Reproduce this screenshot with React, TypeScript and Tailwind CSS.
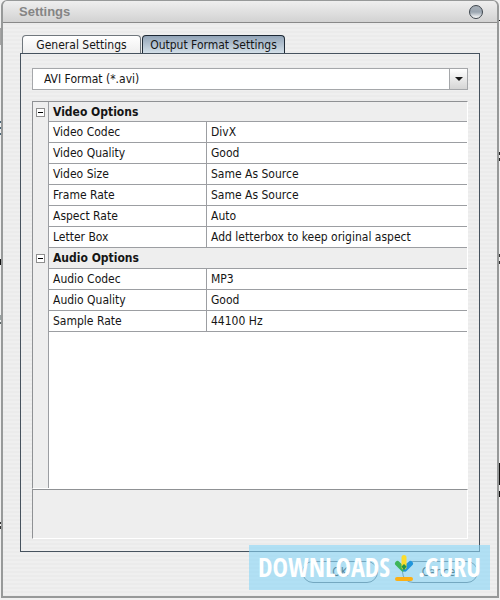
import React from "react";

const video = [
  ["Video Codec", "DivX"],
  ["Video Quality", "Good"],
  ["Video Size", "Same As Source"],
  ["Frame Rate", "Same As Source"],
  ["Aspect Rate", "Auto"],
  ["Letter Box", "Add letterbox to keep original aspect"],
];

const audio = [
  ["Audio Codec", "MP3"],
  ["Audio Quality", "Good"],
  ["Sample Rate", "44100 Hz"],
];

function Group({ title, rows, first }: { title: string; rows: string[][]; first?: boolean }) {
  return (
    <tbody>
      <tr className={first ? "h-5" : "h-[21px]"}>
        <td className="border-r border-[#9c9ea2]">
          <button
            aria-label={"Collapse " + title}
            className="mx-auto flex size-[9px] items-center justify-center border border-[#8f8f8f] bg-white"
          >
            <span className="h-px w-[5px] bg-black" />
          </button>
        </td>
        <th colSpan={2} className="border-b border-[#9c9ea2] px-1 text-left font-bold">
          {title}
        </th>
      </tr>
      {rows.map(([name, value]) => (
        <tr key={name} className="h-[21px]">
          <td className="border-r border-[#9c9ea2]" />
          <th className="border-r border-b border-[#9c9ea2] bg-white px-1 text-left font-normal">{name}</th>
          <td className="border-b border-[#9c9ea2] bg-white px-1">{value}</td>
        </tr>
      ))}
    </tbody>
  );
}

function Logo() {
  return (
    <svg viewBox="0 0 20 28" className="mx-1 h-7 w-5" aria-hidden="true">
      <g strokeLinecap="round" strokeWidth="5" fill="none">
        <path d="M3.5 9.5L9 15" stroke="#3fb559" />
        <path d="M16.500 9.500L11 15" stroke="#2196dc" />
        <path d="M10 3.500V13" stroke="#fbdc2c" />
        <path d="M7.500 12.500L10 10L12.500 12.500L10 16.500Z" fill="#239447" stroke="none" />
        <path d="M3 25H17" stroke="#fbb016" strokeWidth="4" />
      </g>
    </svg>
  );
}

// Strips of the window behind the dialog: space above, height, colour.
type Mark = [number, number, string];
const leftMarks: Mark[] = [
  [28, 17, "bg-[#a5a5a5]"],
  [76, 2, "bg-[#4b6677]"],
  [4, 2, "bg-[#4b6677]"],
  [4, 2, "bg-[#4b6677]"],
  [124, 6, "bg-[#111111]"],
  [50, 5, "bg-[#9aa3a3]"],
  [2, 2, "bg-[#5c6666]"],
  [198, 2, "bg-[#333333]"],
  [2, 3, "bg-[#333333]"],
];
const rightMarks: Mark[] = [
  [20, 1, "bg-[#111111]"],
  [131, 3, "bg-[#222222]"],
  [3, 3, "bg-[#222222]"],
  [93, 3, "bg-[#333333]"],
  [4, 3, "bg-[#333333]"],
  [199, 22, "bg-[#111111]"],
  [6, 6, "bg-[#111111]"],
];

function Edge({ marks, className }: { marks: Mark[]; className: string }) {
  return (
    <div className={className} aria-hidden="true">
      {marks.map(([gap, height, color], i) => (
        <div key={i} className={color} style={{ marginTop: gap, height }} />
      ))}
    </div>
  );
}

export default function App() {
  return (
    <div className="flex min-h-screen bg-[#f0f0f0] font-['DejaVu_Sans_Condensed','DejaVu_Sans',sans-serif] text-xs text-[#151515]">
      <Edge marks={leftMarks} className="flex w-px flex-col" />
      <main className="relative mb-0.5 flex flex-1 flex-col rounded-t-md border-2 border-t border-[#979999] bg-[repeating-linear-gradient(#efefef_0_2px,#ebebeb_2px_4px)]">
        <header className="flex h-[22px] items-center justify-between rounded-t-md border-b border-[#898989] bg-linear-to-b from-[#efefef] to-[#d2d2d2] pr-3.5 pl-4">
          <h1 className="font-['Liberation_Sans',Arial,sans-serif] text-[13px] font-bold text-[#858585]">Settings</h1>
          <button
            aria-label="Close"
            className="size-3.5 rounded-full border border-[#3d454d] bg-linear-to-b from-[#a8b0b8] via-[#9aa5b0] to-white"
          />
        </header>
        <div className="flex flex-1 flex-col px-[17px] pt-3">
          <div role="tablist" className="flex h-[18px] gap-px pl-0.5">
            <button
              role="tab"
              aria-selected="true"
              className="w-[119px] rounded-t border border-b-0 border-[#70777d] bg-linear-to-b from-white to-[#eeeeee] leading-[14px]"
            >
              General Settings
            </button>
            <button
              role="tab"
              aria-selected="false"
              className="w-[143px] rounded-t border border-b-0 border-[#1d2935] bg-linear-to-b from-[#93a5b8] to-[#d3dfe8] leading-[14px] whitespace-nowrap"
            >
              Output Format Settings
            </button>
          </div>
          <section className="flex flex-1 flex-col border border-[#46525e] px-[11px] pt-3.5 pb-3">
            <div className="relative flex h-[22px] border border-[#a5a7aa] bg-white">
              <select
                aria-label="Output format"
                className="flex-1 appearance-none bg-transparent pl-[11px] outline-none"
              >
                <option>AVI Format (*.avi)</option>
              </select>
              <span className="pointer-events-none flex w-[18px] items-center justify-center border-l border-[#a5a7aa] bg-linear-to-b from-white to-[#d5d5d5]">
                <span className="border-x-4 border-t-4 border-x-transparent border-t-[#181818]" />
              </span>
            </div>
            <div className="mt-[11px] flex flex-1 flex-col border border-t-[#8f9194] border-r-white border-b-white border-l-[#8f9194] bg-[#eeeeee]">
              <table className="w-full table-fixed border-separate border-spacing-0 leading-4 [&_td]:py-0 [&_th]:py-0">
                <colgroup>
                  <col className="w-4" />
                  <col className="w-[158px]" />
                  <col />
                </colgroup>
                <Group title="Video Options" rows={video} first />
                <Group title="Audio Options" rows={audio} />
              </table>
              <div className="flex flex-1">
                <div className="w-4 border-r border-[#9c9ea2]" />
                <div className="flex-1 bg-white" />
              </div>
            </div>
            <div className="h-[50px] border border-t-[#8f9194] border-r-white border-b-white border-l-[#8f9194] bg-[#eeeeee]" />
          </section>
        </div>
        <footer className="flex h-[44px] items-center justify-end gap-6 pr-[19px] pb-1">
          <button className="h-[22px] w-[76px] rounded-full border border-[#59656f] bg-[#eeeeee]">OK</button>
          <button className="h-[22px] w-[76px] rounded-full border border-[#59656f] bg-[#eeeeee]">Cancel</button>
        </footer>
        <div className="pointer-events-none absolute right-[7px] bottom-1.5 flex h-[45px] w-[241px] items-center justify-center bg-[#87d5f7]/60 font-['Liberation_Sans_Narrow','Open_Sans_Condensed',sans-serif] text-[26px] font-bold text-white">
          <span>DOWNLOADS</span>
          <Logo />
          <span>.GURU</span>
        </div>
      </main>
      <Edge marks={rightMarks} className="flex w-px flex-col" />
    </div>
  );
}
